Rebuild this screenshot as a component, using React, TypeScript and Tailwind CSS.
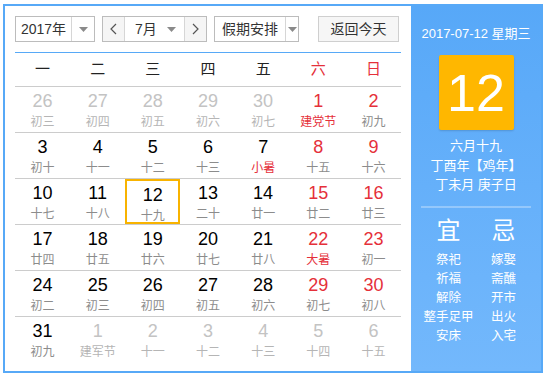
import React from 'react'

type Day = { n: number; lunar: string; other?: boolean; weekend?: boolean; fest?: boolean; today?: boolean }

const weekdays = ['一', '二', '三', '四', '五', '六', '日']

const rows: [number, string, boolean?][][] = [
  [[26, '初三', true], [27, '初四', true], [28, '初五', true], [29, '初六', true], [30, '初七', true], [1, '建党节'], [2, '初九']],
  [[3, '初十'], [4, '十一'], [5, '十二'], [6, '十三'], [7, '小暑'], [8, '十五'], [9, '十六']],
  [[10, '十七'], [11, '十八'], [12, '十九'], [13, '二十'], [14, '廿一'], [15, '廿二'], [16, '廿三']],
  [[17, '廿四'], [18, '廿五'], [19, '廿六'], [20, '廿七'], [21, '廿八'], [22, '大暑'], [23, '初一']],
  [[24, '初二'], [25, '初三'], [26, '初四'], [27, '初五'], [28, '初六'], [29, '初七'], [30, '初八']],
  [[31, '初九'], [1, '建军节', true], [2, '十一', true], [3, '十二', true], [4, '十三', true], [5, '十四', true], [6, '十五', true]],
]

const festivals = ['建党节', '小暑', '大暑', '建军节']

const yi = ['祭祀', '祈福', '解除', '整手足甲', '安床']
const ji = ['嫁娶', '斋醮', '开市', '出火', '入宅']

function Caret() {
  return (
    <svg width="9" height="5" viewBox="0 0 9 5">
      <path d="M0 0h9L4.5 5z" fill="#8a8a8a" />
    </svg>
  )
}

function Chevron({ dir }: { dir: 'l' | 'r' }) {
  return (
    <svg width="7" height="12" viewBox="0 0 7 12">
      <path d={dir === 'l' ? 'M6 1L1 6l5 5' : 'M1 1l5 5-5 5'} fill="none" stroke="#555" strokeWidth="1.2" />
    </svg>
  )
}

function Cell({ d }: { d: Day }) {
  let numColor = 'text-black'
  if (d.other) numColor = 'text-[#c3c3c3]'
  else if (d.weekend) numColor = 'text-[#e5303a]'
  let lunarColor = 'text-[#8c8c8c]'
  if (d.other) lunarColor = 'text-[#b5b5b5]'
  else if (d.fest) lunarColor = 'text-[#e5303a]'
  return (
    <div
      className={`flex flex-col items-center pt-[4px] h-[45px] ${d.today ? 'border-2 border-[#f8b300] pt-[2px]' : ''}`}
    >
      <span className={`text-[18px] leading-[20px] ${numColor}`}>{d.n}</span>
      <span className={`text-[12px] leading-[14px] mt-[4px] ${lunarColor}`}>{d.lunar}</span>
    </div>
  )
}

export default function App() {
  return (
    <div className="w-[543px] h-[377px] bg-white overflow-hidden font-['Liberation_Sans','Noto_Sans_CJK_SC',sans-serif]">
      <div className="ml-[3px] mt-[4px] w-[540px] h-[369px] border-2 border-[#57a9f7] flex">
        {/* Left: calendar */}
        <div className="w-[406px] px-[10px] pt-[10px]">
          <div className="flex h-[26px] text-[14px] text-[#333]">
            <div className="w-[80px] flex border border-[#bcbcbc]">
              <div className="w-[55px] flex items-center justify-center">2017年</div>
              <div className="flex-1 flex items-center justify-center border-l border-[#d6d6d6]">
                <Caret />
              </div>
            </div>
            <div className="ml-[7px] w-[105px] flex border border-[#bcbcbc]">
              <div className="w-[22px] flex items-center justify-center bg-[#f5f5f5] border-r border-[#d6d6d6]">
                <Chevron dir="l" />
              </div>
              <div className="flex-1 flex items-center">
                <span className="ml-[10px]">7月</span>
                <span className="ml-auto mr-[8px] flex"><Caret /></span>
              </div>
              <div className="w-[22px] flex items-center justify-center bg-[#f5f5f5] border-l border-[#d6d6d6]">
                <Chevron dir="r" />
              </div>
            </div>
            <div className="ml-[7px] w-[85px] flex border border-[#bcbcbc]">
              <div className="w-[70px] flex items-center justify-center">假期安排</div>
              <div className="flex-1 flex items-center justify-center border-l border-[#d6d6d6]">
                <Caret />
              </div>
            </div>
            <div className="ml-[19px] w-[81px] flex items-center justify-center border border-[#cfcfcf] bg-[#f6f6f6]">
              返回今天
            </div>
          </div>

          <div className="mt-[10px] h-px bg-[#57a9f7]" />

          <div className="grid grid-cols-7 h-[34px] border-b border-[#cccccc] items-center text-[15px]">
            {weekdays.map((w, i) => (
              <div key={w} className={`text-center ${i >= 5 ? 'text-[#e5303a]' : 'text-[#222]'}`}>
                {w}
              </div>
            ))}
          </div>

          {rows.map((row, ri) => (
            <div
              key={ri}
              className={`grid grid-cols-7 h-[46px] ${ri < rows.length - 1 ? 'border-b border-[#cccccc]' : ''}`}
            >
              {row.map(([n, lunar, other], ci) => (
                <Cell
                  key={ci}
                  d={{
                    n,
                    lunar,
                    other,
                    weekend: ci >= 5,
                    fest: festivals.includes(lunar),
                    today: !other && n === 12,
                  }}
                />
              ))}
            </div>
          ))}
        </div>

        {/* Right: day detail */}
        <div className="flex-1 bg-gradient-to-b from-[#57a8f8] to-[#73b8fc] text-white flex flex-col items-center">
          <div className="mt-[19px] text-[13px] leading-[18px]">2017-07-12 星期三</div>
          <div className="mt-[12px] w-[75px] h-[75px] rounded-[2px] bg-[#ffb700] shadow-[0_1px_2px_rgba(0,0,0,0.15)] flex items-center justify-center text-[52px] leading-none">
            12
          </div>
          <div className="mt-[6px] text-[13px] leading-[19.5px] text-center">
            <div>六月十九</div>
            <div>丁酉年【鸡年】</div>
            <div>丁未月 庚子日</div>
          </div>
          <div className="mt-[11px] w-[110px] h-[2px] bg-white/30" />
          <div className="mt-[11px] w-[110px] grid grid-cols-2 text-center">
            <div className="text-[24px] leading-[24px]">宜</div>
            <div className="text-[24px] leading-[24px]">忌</div>
            <div className="mt-[8px] text-[12.5px] leading-[19px]">
              {yi.map((t) => (
                <div key={t} className="whitespace-nowrap">{t}</div>
              ))}
            </div>
            <div className="mt-[8px] text-[12.5px] leading-[19px]">
              {ji.map((t) => (
                <div key={t}>{t}</div>
              ))}
            </div>
          </div>
        </div>
      </div>
    </div>
  )
}
